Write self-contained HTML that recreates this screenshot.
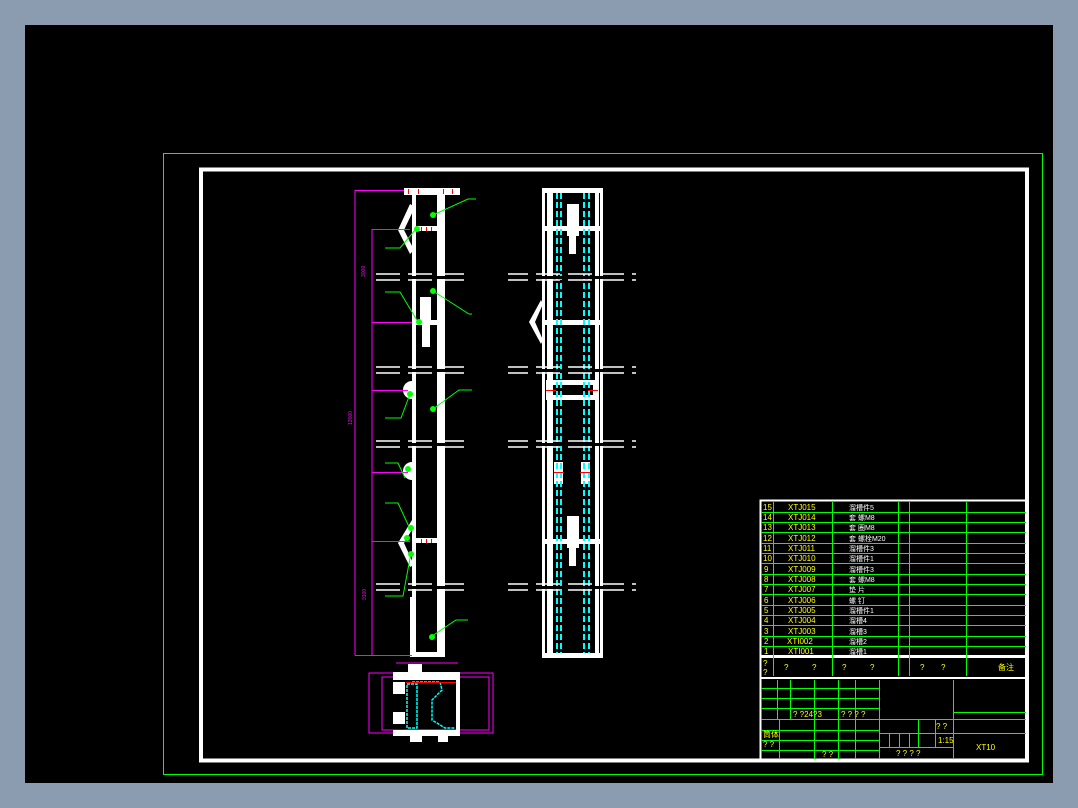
<!DOCTYPE html>
<html><head><meta charset="utf-8"><style>
html,body{margin:0;padding:0;width:1078px;height:808px;overflow:hidden;background:#8b9bb0}
svg{position:absolute;left:0;top:0}
text{font-family:"Liberation Sans","Noto Sans CJK SC",sans-serif}
</style></head><body>
<svg width="1078" height="808" viewBox="0 0 1078 808">
<rect x="25" y="25" width="1028" height="758" fill="#000"/>
<rect x="163.5" y="153.5" width="879" height="621" fill="none" stroke="#00ff00" stroke-width="1"/>
<rect x="201" y="169.5" width="826" height="591" fill="none" stroke="#fff" stroke-width="4"/>

<!-- left elevation -->
<g fill="#fff">
<rect x="404" y="188" width="56" height="7"/>
<rect x="412" y="195" width="4" height="460"/>
<rect x="437" y="195" width="8" height="462"/>
<rect x="410" y="597" width="6" height="60"/>
<rect x="410" y="652" width="35" height="5"/>
<rect x="416" y="226" width="21" height="5"/>
<rect x="416" y="320" width="21" height="5"/>
<rect x="416" y="538" width="21" height="5"/>
<rect x="420" y="297" width="11" height="24"/>
<rect x="422" y="321" width="8" height="26"/>
<polygon points="410,204 415,207 404,230 414,250 410,254 398,230"/>
<polygon points="412,520 416,523 404,543 414,565 410,567 398,543"/>
<path d="M412,381 a9,9 0 1 0 0,18 z"/>
<path d="M412,462 a9,9 0 1 0 0,18 z"/>
</g>
<g fill="#ff0000"><rect x="408" y="189" width="1" height="5"/><rect x="418" y="189" width="1" height="5"/><rect x="443" y="189" width="1" height="5"/><rect x="452" y="189" width="1" height="5"/><rect x="421" y="227" width="1" height="4"/><rect x="426" y="227" width="1" height="4"/><rect x="431" y="227" width="1" height="4"/><rect x="421" y="539" width="1" height="4"/><rect x="426" y="539" width="1" height="4"/><rect x="431" y="539" width="1" height="4"/></g>
<!-- magenta dims -->
<g stroke="#ff00ff" stroke-width="1" fill="none">
<line x1="355" y1="190" x2="355" y2="655"/>
<line x1="372" y1="229" x2="372" y2="655"/>
<line x1="355" y1="190.5" x2="404" y2="190.5"/>
<line x1="372" y1="229.5" x2="410" y2="229.5"/>
<line x1="372" y1="322.5" x2="412" y2="322.5"/>
<line x1="372" y1="390.5" x2="408" y2="390.5"/>
<line x1="372" y1="472.5" x2="408" y2="472.5"/>
<line x1="372" y1="541.5" x2="410" y2="541.5"/>
<line x1="355" y1="655.5" x2="412" y2="655.5"/>
<rect x="369" y="673" width="124" height="60"/>
<rect x="382" y="677" width="107" height="53"/>
<line x1="396" y1="663" x2="458" y2="663"/>
</g>
<g fill="#ff00ff" font-size="5"><text x="365" y="277" transform="rotate(-90 365 277)">3000</text><text x="352" y="425" transform="rotate(-90 352 425)">12000</text><text x="366" y="600" transform="rotate(-90 366 600)">3100</text></g>
<!-- green leaders -->
<g stroke="#00ff00" fill="none" stroke-width="1">
<polyline points="433,215 468,199 476,199"/>
<polyline points="433,291 469,314 476,314"/>
<polyline points="433,409 459,390 476,390"/>
<polyline points="432,636 456,620 468,620"/>
<polyline points="416,229 400,248 385,248"/>
<polyline points="418,322 400,292 385,292 M400,302 385,302 M400,315 385,315"/>
<polyline points="410,394 401,418 385,418"/>
<polyline points="405,478 398,463 385,463"/>
<polyline points="410,529 398,503 385,503 M400,522 385,522 M400,531 385,531"/>
<polyline points="411,553 403,596 385,596"/>
</g>
<g fill="#00ff00"><circle cx="433" cy="215" r="3"/><circle cx="433" cy="291" r="3"/><circle cx="433" cy="409" r="3"/><circle cx="432" cy="637" r="3"/><circle cx="417" cy="229" r="3"/><circle cx="419" cy="322" r="3"/><circle cx="410" cy="394" r="3"/><circle cx="408" cy="469" r="3"/><circle cx="411" cy="528" r="3"/><circle cx="407" cy="538" r="3"/><circle cx="411" cy="554" r="3"/></g>
<!-- right plan -->
<g fill="#fff">
<rect x="542" y="188" width="3" height="470"/><rect x="547" y="188" width="6" height="470"/>
<rect x="595" y="188" width="4" height="470"/><rect x="600" y="188" width="3" height="470"/>
<rect x="542" y="188" width="61" height="5"/><rect x="542" y="653" width="61" height="5"/>
<rect x="545" y="226" width="55" height="5"/><rect x="545" y="320" width="55" height="5"/><rect x="545" y="539" width="55" height="5"/>
<rect x="567" y="204" width="12" height="32"/><rect x="569" y="236" width="7" height="18"/>
<rect x="567" y="516" width="12" height="32"/><rect x="569" y="548" width="7" height="18"/>
<rect x="546" y="380" width="52" height="5"/><rect x="546" y="395" width="52" height="5"/>
<rect x="546" y="380" width="5" height="20"/><rect x="593" y="380" width="5" height="20"/>
<rect x="554" y="462" width="9" height="22"/><rect x="581" y="462" width="9" height="22"/>
<polygon points="541,300 543,304 535,322 543,340 541,344 529,322"/>
</g>
<g stroke="#00ffff" stroke-width="2" stroke-dasharray="6,3"><line x1="557" y1="193" x2="557" y2="653"/><line x1="561" y1="193" x2="561" y2="653"/><line x1="584" y1="193" x2="584" y2="653"/><line x1="589" y1="193" x2="589" y2="653"/></g>
<g stroke="#ff0000"><line x1="546" y1="390.5" x2="556" y2="390.5"/><line x1="588" y1="390.5" x2="598" y2="390.5"/><line x1="554" y1="472.5" x2="564" y2="472.5"/><line x1="580" y1="472.5" x2="590" y2="472.5"/></g>
<!-- break gaps -->
<g fill="#000"><rect x="405" y="276" width="200" height="3"/><rect x="405" y="369" width="200" height="3"/><rect x="405" y="443" width="200" height="3"/><rect x="405" y="586" width="200" height="3"/></g>
<g stroke="#fff" stroke-width="1.5" stroke-dasharray="24,8">
<line x1="376" y1="274" x2="636" y2="274"/><line x1="376" y1="280" x2="636" y2="280"/>
<line x1="376" y1="367" x2="636" y2="367"/><line x1="376" y1="373" x2="636" y2="373"/>
<line x1="376" y1="441" x2="636" y2="441"/><line x1="376" y1="447" x2="636" y2="447"/>
<line x1="376" y1="584" x2="636" y2="584"/><line x1="376" y1="590" x2="636" y2="590"/>
</g>
<rect x="472" y="270" width="36" height="330" fill="#000"/>
<!-- bottom section view -->
<g fill="#fff"><rect x="393" y="672" width="67" height="8"/><rect x="456" y="680" width="4" height="56"/><rect x="393" y="730" width="67" height="6"/><rect x="393" y="682" width="12" height="12"/><rect x="393" y="712" width="12" height="12"/><rect x="408" y="664" width="14" height="10"/><rect x="410" y="736" width="12" height="6"/><rect x="438" y="736" width="10" height="6"/></g>
<g stroke="#00ffff" fill="none" stroke-width="1.5" stroke-dasharray="3,1"><polyline points="412,682 440,682 442,690 432,700 432,720 445,728 455,728"/><rect x="407" y="684" width="10" height="44"/></g>
<g stroke="#ff0000"><line x1="406" y1="682.5" x2="456" y2="682.5"/><line x1="406" y1="729.5" x2="456" y2="729.5"/></g>

<!-- title block -->
<g stroke="#fff" fill="none"><rect x="760.5" y="500.5" width="266" height="259" stroke-width="2"/><line x1="761" y1="656.5" x2="1026" y2="656.5" stroke-width="3"/><line x1="761" y1="678" x2="1026" y2="678" stroke-width="2"/></g>
<g stroke="#00ff00" stroke-width="1" fill="none">
<path d="M761,512.5H1026M761,522.5H1026M761,532.5H1026M761,543.5H1026M761,553.5H1026M761,563.5H1026M761,574.5H1026M761,584.5H1026M761,594.5H1026M761,605.5H1026M761,615.5H1026M761,625.5H1026M761,636.5H1026M761,646.5H1026"/>
<path d="M773.5,502V676M832.5,502V676M898.5,502V676M909.5,502V676M966.5,502V676"/>
<path d="M761,688.5H879M761,698.5H879M761,708.5H879M761,719.5H1026M761,730.5H879M761,740.5H879M761,750.5H879M954,712.5H1026M879,733.5H1026M879,747.5H954"/>
<path d="M777.5,680V719M790.5,680V719M814.5,680V759M838.5,680V759M855.5,680V759M879.5,680V759M953.5,680V759M779.5,719V759M918.5,719V747M935.5,719V747M889.5,733V747M899.5,733V747M909.5,733V747"/>
</g>
<g fill="#ffff00" font-size="8" font-family="Liberation Sans">
<text x="763" y="510">15</text><text x="763" y="520">14</text><text x="763" y="530">13</text><text x="763" y="541">12</text><text x="763" y="551">11</text><text x="763" y="561">10</text><text x="764" y="572">9</text><text x="764" y="582">8</text><text x="764" y="592">7</text><text x="764" y="603">6</text><text x="764" y="613">5</text><text x="764" y="623">4</text><text x="764" y="634">3</text><text x="764" y="644">2</text><text x="764" y="654">1</text>
<text x="788" y="510">XTJ015</text><text x="788" y="520">XTJ014</text><text x="788" y="530">XTJ013</text><text x="788" y="541">XTJ012</text><text x="788" y="551">XTJ011</text><text x="788" y="561">XTJ010</text><text x="788" y="572">XTJ009</text><text x="788" y="582">XTJ008</text><text x="788" y="592">XTJ007</text><text x="788" y="603">XTJ006</text><text x="788" y="613">XTJ005</text><text x="788" y="623">XTJ004</text><text x="788" y="634">XTJ003</text><text x="787" y="644">XTI002</text><text x="788" y="654">XTI001</text>
<text x="763" y="666">?</text><text x="763" y="675">?</text><text x="784" y="670">?</text><text x="812" y="670">?</text><text x="842" y="670">?</text><text x="870" y="670">?</text><text x="920" y="670">?</text><text x="941" y="670">?</text><text x="998" y="670">备注</text>
<text x="793" y="717">? ?24?3</text><text x="841" y="717">? ? ? ?</text><text x="763" y="737">筒体</text><text x="763" y="747">? ?</text><text x="822" y="757">? ?</text><text x="936" y="729">? ?</text><text x="938" y="743">1:15</text><text x="896" y="756">? ? ? ?</text><text x="976" y="750">XT10</text>
</g>
<g fill="#fff" font-size="7" font-family="Liberation Sans,Noto Sans CJK SC,sans-serif">
<text x="849" y="510">溜槽件5</text><text x="849" y="520">套 螺M8</text><text x="849" y="530">套 圈M8</text><text x="849" y="541">套 螺栓M20</text><text x="849" y="551">溜槽件3</text><text x="849" y="561">溜槽件1</text><text x="849" y="572">溜槽件3</text><text x="849" y="582">套 螺M8</text><text x="849" y="592">垫 片</text><text x="849" y="603">螺 钉</text><text x="849" y="613">溜槽件1</text><text x="849" y="623">溜槽4</text><text x="849" y="634">溜槽3</text><text x="849" y="644">溜槽2</text><text x="849" y="654">溜槽1</text>
</g>
</svg>
</body></html>
